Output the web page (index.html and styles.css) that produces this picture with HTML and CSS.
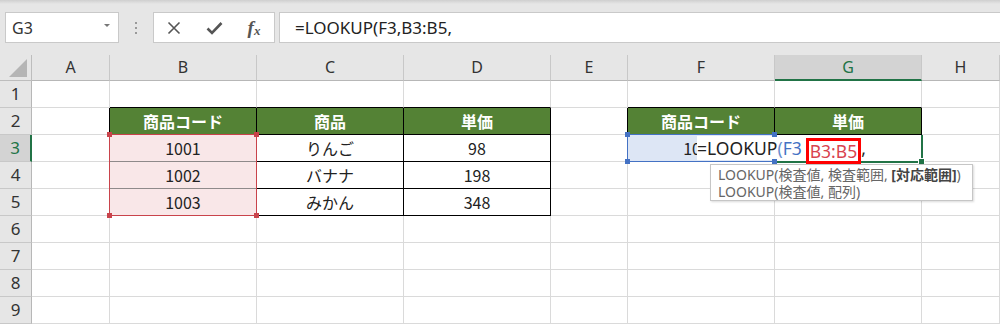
FILE: index.html
```html
<!DOCTYPE html>
<html>
<head>
	<meta charset="UTF-8">
	<title>LOOKUP</title>
	<link rel="stylesheet" href="styles.css">
</head>
<body>
	<div class="toolbar">
		<div class="namebox">
			<span>G3</span>
			<span class="caret"></span>
		</div>
		<div class="grip"><i></i><i></i><i></i></div>
		<div class="fxbox">
			<span class="slot">
				<svg width="14" height="14" viewBox="0 0 14 14"><path d="M1.5 1.5 L12.5 12.5 M12.5 1.5 L1.5 12.5" stroke="#555" stroke-width="1.6" fill="none"/></svg>
			</span>
			<span class="slot">
				<svg width="17" height="14" viewBox="0 0 17 14"><path d="M1.5 7.5 L6 12 L15.5 2" stroke="#555" stroke-width="2.6" fill="none"/></svg>
			</span>
			<span class="slot fx"><i>f</i><small>x</small></span>
		</div>
		<div class="formula">=LOOKUP(F3,B3:B5,</div>
	</div>

	<div class="sheet">
		<div class="grid">
			<div class="corner"><span></span></div>
			<div class="ch">A</div>
			<div class="ch">B</div>
			<div class="ch">C</div>
			<div class="ch">D</div>
			<div class="ch">E</div>
			<div class="ch">F</div>
			<div class="ch active">G</div>
			<div class="ch">H</div>

			<div class="rh">1</div>
			<div class="c"></div>
			<div class="c tb"></div>
			<div class="c tb"></div>
			<div class="c tb"></div>
			<div class="c"></div>
			<div class="c tb"></div>
			<div class="c tb"></div>
			<div class="c"></div>

			<div class="rh">2</div>
			<div class="c tr"></div>
			<div class="hd">商品コード</div>
			<div class="hd">商品</div>
			<div class="hd">単価</div>
			<div class="c tr"></div>
			<div class="hd">商品コード</div>
			<div class="hd">単価</div>
			<div class="c"></div>

			<div class="rh active">3</div>
			<div class="c tr"></div>
			<div class="td sel">1001</div>
			<div class="td">りんご</div>
			<div class="td">98</div>
			<div class="c tr"></div>
			<div class="td fsel">1001</div>
			<div class="td"></div>
			<div class="c"></div>

			<div class="rh">4</div>
			<div class="c tr"></div>
			<div class="td sel">1002</div>
			<div class="td">バナナ</div>
			<div class="td">198</div>
			<div class="c"></div>
			<div class="c"></div>
			<div class="c"></div>
			<div class="c"></div>

			<div class="rh">5</div>
			<div class="c tr"></div>
			<div class="td sel last">1003</div>
			<div class="td">みかん</div>
			<div class="td">348</div>
			<div class="c"></div>
			<div class="c"></div>
			<div class="c"></div>
			<div class="c"></div>

			<div class="rh">6</div>
			<div class="c"></div><div class="c"></div><div class="c"></div><div class="c"></div>
			<div class="c"></div><div class="c"></div><div class="c"></div><div class="c"></div>

			<div class="rh">7</div>
			<div class="c"></div><div class="c"></div><div class="c"></div><div class="c"></div>
			<div class="c"></div><div class="c"></div><div class="c"></div><div class="c"></div>

			<div class="rh">8</div>
			<div class="c"></div><div class="c"></div><div class="c"></div><div class="c"></div>
			<div class="c"></div><div class="c"></div><div class="c"></div><div class="c"></div>

			<div class="rh">9</div>
			<div class="c"></div><div class="c"></div><div class="c"></div><div class="c"></div>
			<div class="c"></div><div class="c"></div><div class="c"></div><div class="c"></div>
		</div>

		<!-- capa de edicion: rangos referenciados, celda activa, editor -->
		<div class="marks">
			<div class="range range-b">
				<span class="h tl"></span><span class="h tr2"></span><span class="h bl"></span><span class="h br"></span>
			</div>
			<div class="range range-f">
				<span class="h tl"></span><span class="h tr2"></span><span class="h bl"></span><span class="h br"></span>
			</div>
			<div class="cursor"><span class="fill"></span></div>
			<div class="editor">=LOOKUP<span class="paren">(</span><span class="ref-f">F3</span><span class="ref-b">B3:B5</span>,</div>
		</div>

		<div class="tip">
			<div>LOOKUP(検査値, 検査範囲, <b>[対応範囲]</b>)</div>
			<div>LOOKUP(検査値, 配列)</div>
		</div>
	</div>
</body>
</html>
```

FILE: styles.css
```css
body {
	margin: 0;
	width: 1000px;
	height: 324px;
	overflow: hidden;
	background: #fff;
	font-family: "Noto Sans", "Noto Sans CJK JP", sans-serif;
	color: #333;
}

/* barra de formulas */
.toolbar {
	height: 55px;
	box-sizing: border-box;
	padding: 12px 0 0 5px;
	display: flex;
	align-items: flex-start;
	background: linear-gradient(#cfcfcf, #e6e6e6 4px, #e6e6e6);
}

.namebox,
.fxbox,
.formula {
	height: 31px;
	box-sizing: border-box;
	background: #fff;
	border: 1px solid #c9c9c9;
}

.namebox {
	width: 114px;
	display: flex;
	align-items: center;
	justify-content: space-between;
	padding: 0 8px 0 6px;
	font-size: 16px;
	color: #333;
}

.caret {
	width: 0;
	height: 0;
	border-left: 3px solid transparent;
	border-right: 3px solid transparent;
	border-top: 3px solid #777;
	margin-top: -5px;
}

.grip {
	width: 34px;
	height: 31px;
	display: flex;
	flex-direction: column;
	align-items: center;
	justify-content: center;
	gap: 3px;
}

.grip i {
	width: 2px;
	height: 2px;
	background: #999;
}

.fxbox {
	width: 122px;
	display: flex;
	align-items: center;
	margin-right: 4px;
}

.slot {
	width: 40px;
	display: flex;
	justify-content: center;
	align-items: center;
}

.fx {
	font-family: "Liberation Serif", serif;
	font-style: italic;
	color: #555;
	font-size: 19px;
	font-weight: bold;
}

.fx small {
	font-size: 13px;
	margin-top: 6px;
	font-style: italic;
}

.formula {
	flex: 1;
	border-right: none;
	padding-left: 15px;
	font-size: 17px;
	line-height: 29px;
	color: #222;
}

/* hoja */
.sheet {
	position: relative;
	font-family: "Noto Sans CJK JP", sans-serif;
	font-size: 16px;
}

.grid,
.marks {
	display: grid;
	grid-template-columns: 32px 78px 147px 147px 147px 77px 147px 147px 78px;
	grid-template-rows: 26px repeat(9, 27px);
}

.marks {
	position: absolute;
	top: 0;
	left: 0;
	right: 0;
	bottom: 0;
	pointer-events: none;
}

.corner {
	background: #e6e6e6;
	border-right: 1px solid #bdbdbd;
	border-bottom: 1px solid #bdbdbd;
	position: relative;
}

.corner span {
	position: absolute;
	right: 4px;
	bottom: 3px;
	width: 0;
	height: 0;
	border-left: 18px solid transparent;
	border-bottom: 18px solid #b5b5b5;
}

.ch {
	background: #e6e6e6;
	border-right: 1px solid #c8c8c8;
	border-bottom: 1px solid #b7b7b7;
	text-align: center;
	font-family: "Noto Sans", sans-serif;
	font-size: 16px;
	line-height: 25px;
	color: #333;
}

.ch.active {
	background: #d3d3d3;
	color: #217346;
	border-bottom: 2px solid #217346;
}

.rh {
	background: #e6e6e6;
	border-right: 1px solid #b7b7b7;
	border-bottom: 1px solid #c8c8c8;
	font-family: "Noto Sans", sans-serif;
	font-size: 17px;
	line-height: 26px;
	text-align: center;
}

.rh.active {
	background: #d3d3d3;
	color: #217346;
	border-right: 2px solid #217346;
}

.c {
	border-right: 1px solid #dadada;
	border-bottom: 1px solid #dadada;
}

.c.tb {
	border-bottom-color: #000;
}

.c.tr {
	border-right-color: #000;
}

.hd,
.td {
	border-right: 1px solid #000;
	border-bottom: 1px solid #000;
	text-align: center;
	line-height: 26px;
}

.hd {
	background: #548235;
	color: #fff;
	font-weight: bold;
}

.td {
	color: #222;
}

.td.sel {
	background: #f9e7e8;
	border-bottom-color: #8f8a8a;
}

.td.sel.last {
	border-bottom-color: #c0504d;
}

.td.fsel {
	background: #dde6f5;
}

/* rangos marcados */
.range {
	position: relative;
	margin: -1px 0 0 -1px;
}

.range-b {
	grid-column: 3;
	grid-row: 4 / 7;
	border: 1px solid #c9434b;
}

.range-f {
	grid-column: 7;
	grid-row: 4;
	border: 1px solid #4472c4;
}

.h {
	position: absolute;
	width: 5px;
	height: 5px;
	z-index: 5;
}

.range-b .h { background: #c9434b; }
.range-f .h { background: #4472c4; }

.h.tl { left: -3px; top: -3px; }
.h.tr2 { right: -3px; top: -3px; }
.h.bl { left: -3px; bottom: -3px; }
.h.br { right: -3px; bottom: -3px; }

.cursor {
	grid-column: 8;
	grid-row: 4;
	position: relative;
	border-right: 2px solid #217346;
	border-bottom: 2px solid #217346;
	margin: 0 -1px -1px 0;
}

.fill {
	position: absolute;
	right: -4px;
	bottom: -4px;
	width: 5px;
	height: 5px;
	background: #217346;
	border: 1px solid #fff;
	z-index: 5;
}

.editor {
	grid-column: 7 / 9;
	grid-row: 4;
	position: relative;
	z-index: 3;
	margin: 1px 3px 2px 69px;
	background: #fff;
	font-family: "Noto Sans", "Noto Sans CJK JP", sans-serif;
	font-size: 17.5px;
	line-height: 24px;
	color: #222;
	white-space: nowrap;
	display: flex;
	align-items: center;
}

.paren,
.ref-f {
	color: #4472c4;
}

.paren {
	opacity: 0.8;
}

.ref-b {
	color: #d9434f;
	border: 3px solid #f00;
	margin-left: 4px;
	padding: 0 1px;
	line-height: 20px;
	margin-top: 6px;
}

.tip {
	position: absolute;
	left: 710px;
	top: 109px;
	width: 263px;
	height: 37px;
	box-sizing: border-box;
	padding: 1px 0 0 7px;
	background: #fff;
	border: 1px solid #c6c6c6;
	box-shadow: 1px 1px 2px rgba(0, 0, 0, 0.15);
	font-family: "Noto Sans", "Noto Sans CJK JP", sans-serif;
	font-size: 14px;
	line-height: 17px;
	color: #666;
	white-space: nowrap;
	z-index: 6;
}

.tip b {
	color: #444;
}
```
